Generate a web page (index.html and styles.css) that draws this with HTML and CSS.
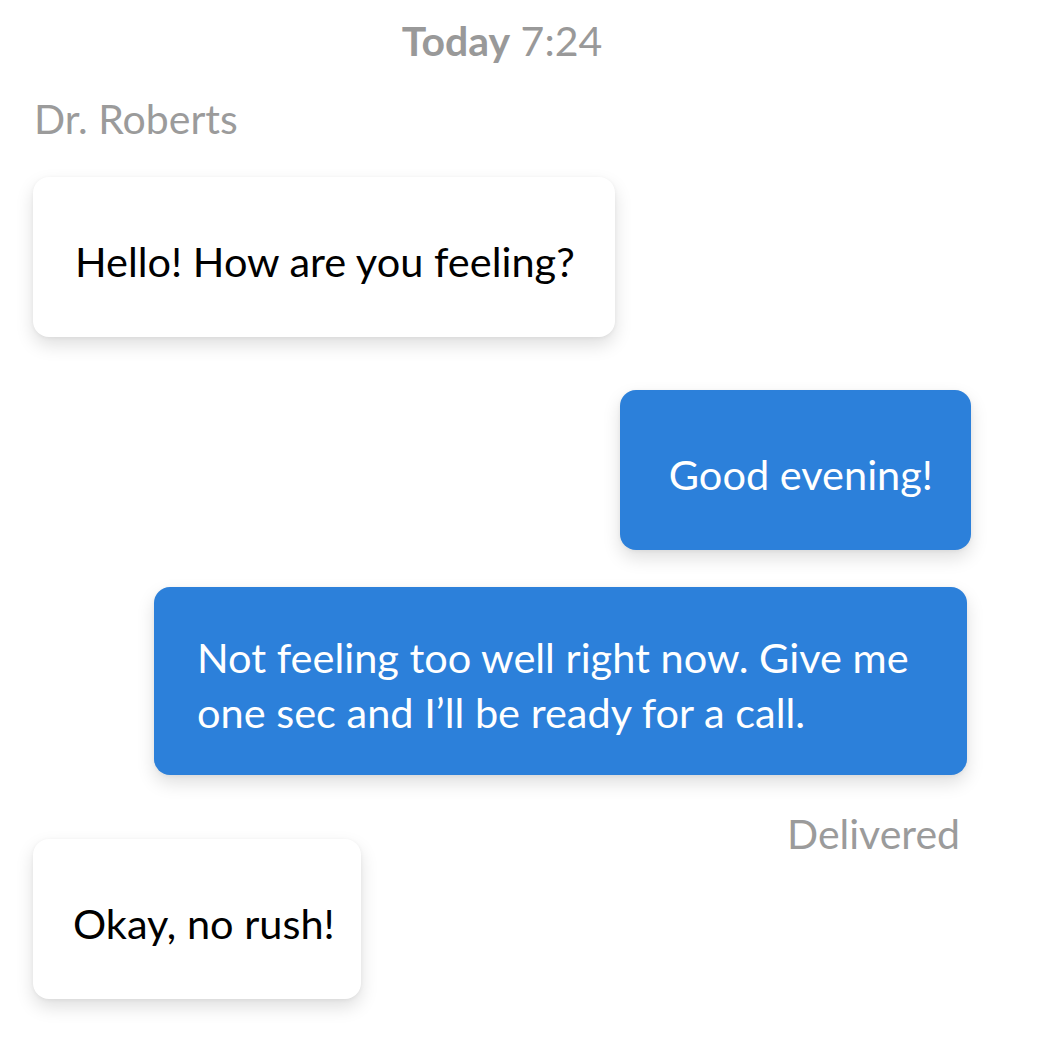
FILE: index.html
```html
<!DOCTYPE html>
<html lang="en">
<head>
<meta charset="utf-8">
<title>Chat</title>
<link rel="stylesheet" href="styles.css">
</head>
<body>
<main class="chat">
  <div class="stamp"><span class="stamp-day">Today</span> 7:24</div>
  <div class="sender">Dr. Roberts</div>
  <div class="bubble bubble-in first">Hello! How are you feeling?</div>
  <div class="bubble bubble-out second">Good evening!</div>
  <div class="bubble bubble-out wide">Not feeling too well right now. Give me one sec and I’ll be ready for a call.</div>
  <div class="status">Delivered</div>
  <div class="bubble bubble-in last">Okay, no rush!</div>
</main>
</body>
</html>
```
FILE: styles.css
```css
html, body {
  margin: 0;
  padding: 0;
  background: #ffffff;
}

.chat {
  display: flex;
  flex-direction: column;
  align-items: flex-start;
  padding: 13px 87px 42px 33px;
  font-family: "Lato", "Noto Sans", sans-serif;
  font-size: 41.5px;
  line-height: 55px;
}

.stamp {
  align-self: center;
  color: #999999;
  font-size: 41px;
}

.stamp-day {
  font-weight: 700;
}

.sender {
  margin-top: 23px;
  color: #9b9b9b;
  font-size: 41px;
  padding-left: 1px;
}

.bubble {
  box-sizing: border-box;
  display: flex;
  align-items: center;
  min-height: 160px;
  padding: 43px 40px 35px 42px;
  border-radius: 16px;
  box-shadow: 0 8px 18px rgba(0, 0, 0, 0.13), 0 1px 4px rgba(0, 0, 0, 0.05);
}

.bubble-in {
  align-self: flex-start;
  background: #ffffff;
  color: #000000;
}

.bubble-out {
  align-self: flex-end;
  background: #2c80da;
  color: #ffffff;
}

.first {
  margin-top: 31px;
}

.second {
  margin-top: 53px;
  padding-left: 49px;
  padding-right: 38px;
}

.wide {
  margin-top: 37px;
  margin-right: 4px;
  max-width: 813px;
  padding-left: 43px;
}

.status {
  align-self: flex-end;
  margin-top: 31px;
  margin-right: 11px;
  color: #9b9b9b;
  font-size: 41px;
}

.last {
  margin-top: -22px;
  padding-left: 40px;
  padding-right: 26px;
}
```
